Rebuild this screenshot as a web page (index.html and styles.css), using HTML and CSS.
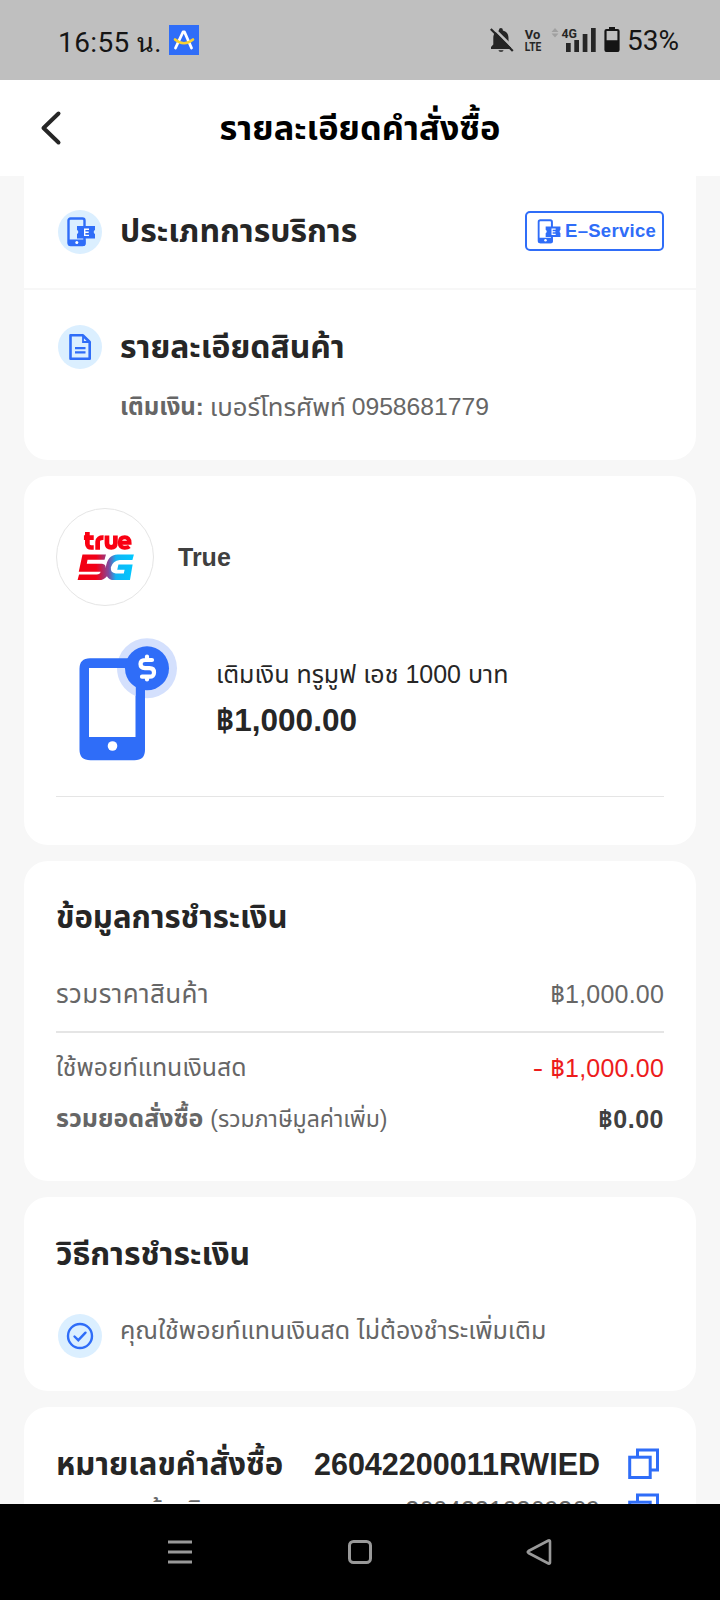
FILE: index.html
```html
<!DOCTYPE html>
<html lang="th">
<head>
<meta charset="utf-8">
<title>รายละเอียดคำสั่งซื้อ</title>
<link rel="stylesheet" href="styles.css">
</head>
<body>
<svg class="defs" width="0" height="0">
  <defs>
    <symbol id="eservice" viewBox="0 0 28 30">
      <rect x="1.5" y="1.5" width="16" height="26.5" rx="2" fill="none" stroke="#2f6df8" stroke-width="2.400"/>
      <path d="M1 22.500h17.500v4.500a2 2 0 0 1-2 2h-13.500a2 2 0 0 1-2-2z" fill="#2f6df8"/>
      <circle cx="9.800" cy="25.600" r="1.500" fill="#fff"/>
      <path d="M10 9h18v4a2.200 2.200 0 0 0 0 4v4.500h-18v-4.500a2.200 2.200 0 0 0 0-4z" fill="#2f6df8"/>
      <path d="M22 12.200h-4.300v6.200h4.300M17.700 15.300h4" fill="none" stroke="#fff" stroke-width="1.400"/>
    </symbol>
    <symbol id="copy" viewBox="0 0 32 32">
      <path d="M9.500 8.500v-6.500h20v20h-6.500" fill="none" stroke="#2f6df8" stroke-width="3"/>
      <rect x="1.700" y="9.200" width="20.500" height="20.300" fill="none" stroke="#2f6df8" stroke-width="3"/>
    </symbol>
  </defs>
</svg>
<div class="screen">
  <div class="status">
    <span class="clock">16:55 <span class="clock-th">น.</span></span>
    <svg class="app" viewBox="0 0 30 30">
      <rect width="30" height="30" fill="#2f6df8"/>
      <path d="M6.500 23l7.500-16h1.500l7 16" fill="none" stroke="#fff" stroke-width="2.800" stroke-linecap="round" stroke-linejoin="round"/>
      <path d="M6 14.500q9 7.500 18 0" fill="none" stroke="#f8d030" stroke-width="2.600" stroke-linecap="round"/>
    </svg>
    <svg class="indicators" viewBox="0 0 132 30">
      <path d="M1 23v-2l2.300-2.500v-6.500c0-4 2-6.700 5.700-7.500v-.7a1.900 1.900 0 0 1 3.800 0v.7c3.700.8 5.700 3.500 5.700 7.500v6.500l2.500 2.500v2z" fill="#262626"/>
      <path d="M8.500 24.200h5c-.3 2-4.700 2-5 0z" fill="#262626"/>
      <path d="M2.500 1.200l23 23" stroke="#bfbfbf" stroke-width="2.600"/>
      <path d="M.800 3l22 22" stroke="#262626" stroke-width="2.200"/>
      <text class="net" x="34.800" y="13" textLength="15.500" lengthAdjust="spacingAndGlyphs">Vo</text>
      <text class="net" x="34.800" y="24.800" textLength="16.500" lengthAdjust="spacingAndGlyphs">LTE</text>
      <path d="M61.500 6l3.500-4 3.500 4zM61.500 7.500l3.500 4 3.500-4z" fill="#a0a0a0"/>
      <text class="net" x="71.500" y="12" textLength="15.500" lengthAdjust="spacingAndGlyphs">4G</text>
      <path d="M76 17h4.700v9h-4.700zM84.300 14h4.700v12h-4.700zM92.700 8h4.700v18h-4.700zM101 2h4.700v24h-4.700z" fill="#262626"/>
      <rect x="115.500" y="4" width="13" height="21" rx="1" fill="none" stroke="#151515" stroke-width="2.200"/>
      <path d="M119 1h6v3h-6zM115 14.200h14v11h-14z" fill="#151515"/>
    </svg>
    <span class="percent">53%</span>
  </div>
  <header class="header">
    <svg class="back" viewBox="0 0 20 34"><path d="M17.500 2.500l-15 14.500 15 14.500" fill="none" stroke="#262626" stroke-width="4" stroke-linecap="round" stroke-linejoin="round"/></svg>
    <h1 class="title">รายละเอียดคำสั่งซื้อ</h1>
  </header>
  <main class="content">
    <section class="card top-card">
      <div class="service">
        <span class="bubble"><svg class="es-icon" viewBox="0 0 28 30"><use href="#eservice"/></svg></span>
        <h2 class="h h-wide">ประเภทการบริการ</h2>
        <span class="badge"><svg class="badge-icon" viewBox="0 0 28 30"><use href="#eservice"/></svg>E–Service</span>
      </div>
      <div class="product">
        <span class="bubble"><svg class="doc-icon" viewBox="0 0 22 26"><path d="M1.500 1.300h12.500l6.700 6.700v16.700h-19.200z" fill="none" stroke="#2f6df8" stroke-width="2.600" stroke-linejoin="round"/><path d="M14 2v6h6z" fill="#dbefff" stroke="#2f6df8" stroke-width="1.800"/><path d="M6 14.200h10.500M6 18.400h10.500" stroke="#2f6df8" stroke-width="2.200"/></svg></span>
        <div class="product-text">
          <h2 class="h h-wide">รายละเอียดสินค้า</h2>
          <p class="t phone"><b>เติมเงิน:</b><span class="phone-label">เบอร์โทรศัพท์</span><span class="phone-no">0958681779</span></p>
        </div>
      </div>
    </section>

    <section class="card item-card">
      <div class="brand">
        <span class="logo"><svg viewBox="0 0 98 98">
          <defs><linearGradient id="g5" x1="0" x2="1"><stop offset="0" stop-color="#f20010"/><stop offset=".33" stop-color="#f20018"/><stop offset=".55" stop-color="#82489c"/><stop offset=".68" stop-color="#12b4f4"/><stop offset="1" stop-color="#00c8ff"/></linearGradient></defs>
          <g fill="none" stroke="#f90012" stroke-width="4.800">
            <path d="M31 23.500v12q0 4 4.500 3.800h2M27.500 29.300h10"/>
            <path d="M41.500 41.500v-8q0-4.500 6-4.200"/>
            <path d="M51 27v8q0 4.200 4.300 4.200t4.300-4.200v-8"/>
            <path d="M65 34.500h9q-.2-5.700-4.800-5.700-5.100 0-5.100 5.500t5.300 5.200q3 0 4.500-1.200" stroke-width="4.200"/>
          </g>
          <path d="M26 46.500h24l-1.500 5.300h-17.300l-.8 4.200h15.600q4 .4 3.700 4.500 1.500-13.700 12.300-14h16.500l-1.500 5.500h-13q-7 .6-9 7.500-.6 5.800 5 6.300h8.200l.8-3.800h-7.500l1.200-5.400h14.500l-2.700 16h-16q-5.300 0-7.500-4-3.500 4-8 4h-22l1.500-5.800h18q3.500 0 4-2.700h-22.300z" fill="url(#g5)"/>
        </svg></span>
        <span class="brand-name">True</span>
      </div>
      <div class="item">
        <svg class="phone-pic" viewBox="0 0 100 124">
          <circle cx="69" cy="30.300" r="30" fill="#d4e0fd"/>
          <path d="M12 20.200h44.500q10.500 0 10.500 10.500v81q0 10.500-10.500 10.500h-44q-11 0-11-10.500v-81q0-10.500 10.500-10.500z" fill="#2f6df8"/>
          <path d="M11 30h46.500v69H11z" fill="#fff"/>
          <path d="M39 30a30 30 0 0 0 18.500 28v-28z" fill="#d4e0fd"/>
          <circle cx="69" cy="30.300" r="22" fill="#2f6df8"/>
          <circle cx="34.500" cy="108" r="4.800" fill="#fff"/>
          <path d="M74 22H67q-4.500 0-4.500 4t4.500 4.200h4.500q4.500 0 4.500 4.300t-4.500 4.200H64M69 18.500v3M69 39v2.500" fill="none" stroke="#fff" stroke-width="4.200" stroke-linecap="round"/>
        </svg>
        <div class="item-text">
          <p class="item-name">เติมเงิน ทรูมูฟ เอช 1000 บาท</p>
          <p class="item-price">฿1,000.00</p>
        </div>
      </div>
    </section>

    <section class="card pay-card">
      <h2 class="h">ข้อมูลการชำระเงิน</h2>
      <div class="row subtotal"><span class="t sub-label">รวมราคาสินค้า</span><span class="num">฿1,000.00</span></div>
      <div class="row points"><span class="t points-label">ใช้พอยท์แทนเงินสด</span><span class="num red"><span class="minus">-</span> ฿1,000.00</span></div>
      <div class="row total"><span class="t"><b>รวมยอดสั่งซื้อ</b> <span class="vat">(รวมภาษีมูลค่าเพิ่ม)</span></span><b class="num dark">฿0.00</b></div>
    </section>

    <section class="card method-card">
      <h2 class="h h-wide">วิธีการชำระเงิน</h2>
      <div class="method">
        <span class="bubble"><svg class="check" viewBox="0 0 28 28"><circle cx="14" cy="14" r="12" fill="none" stroke="#2f6df8" stroke-width="2.400"/><path d="M8.500 14.500l3.800 3.700 7.200-7.500" fill="none" stroke="#2f6df8" stroke-width="2.400" stroke-linecap="round"/></svg></span>
        <p class="t">คุณใช้พอยท์แทนเงินสด ไม่ต้องชำระเพิ่มเติม</p>
      </div>
    </section>

    <section class="card order-card">
      <div class="order-row"><h2 class="h">หมายเลขคำสั่งซื้อ</h2><b class="order-no">26042200011RWIED</b><svg class="copy" viewBox="0 0 32 32"><use href="#copy"/></svg></div>
      <div class="order-row ref"><span class="t ref-label">หมายเลขอ้างอิง</span><span class="ref-no">26042210369369</span><svg class="copy" viewBox="0 0 32 32"><use href="#copy"/></svg></div>
    </section>
  </main>
  <nav class="nav">
    <svg viewBox="0 0 26 28"><path d="M1 4h24M1 14h24M1 24h24" stroke="#999" stroke-width="3"/></svg>
    <svg viewBox="0 0 26 28"><rect x="2.500" y="3.500" width="21" height="21" rx="4" fill="none" stroke="#999" stroke-width="3"/></svg>
    <svg viewBox="0 0 26 28"><path d="M21.500 2.500q1.500-.5 1.500 1v21q0 1.500-1.500 1L1.500 15q-1.500-1 0-2z" fill="none" stroke="#999" stroke-width="2.600" stroke-linejoin="round"/></svg>
  </nav>
</div>
</body>
</html>
```
FILE: styles.css
```css
* { box-sizing: border-box; }
body, h1, h2, p { margin: 0; }
body { background: #f7f7f7; font-family: "Liberation Sans", "Noto Sans Thai", sans-serif; color: #262626; }
.defs { position: absolute; }
svg { display: block; flex: none; overflow: visible; }
.screen { width: 720px; height: 1600px; display: flex; flex-direction: column; overflow: hidden; white-space: nowrap; }

.status { height: 80px; flex: none; background: #bfbfbf; display: flex; align-items: center; padding: 0 40px 0 58px; color: #151515; font-family: Roboto, "Noto Sans Thai", sans-serif; font-size: 28px; }
.clock { width: 104px; line-height: 34px; padding-top: 5px; letter-spacing: .4px; }
.clock-th { font-family: Roboto, "Noto Sans Thai Looped", Loma, Garuda, Waree, "Noto Sans Thai", sans-serif; font-size: 27px; }
.app { width: 30px; height: 30px; margin-left: 7px; }
.indicators { width: 132px; height: 30px; margin: 2px 5px 0 auto; }
.net { font: bold 13.500px Roboto, sans-serif; fill: #262626; }
.percent { width: 53px; }

.header { height: 96px; flex: none; background: #fff; display: flex; align-items: center; justify-content: center; padding: 0 41px; }
.back { width: 20px; height: 34px; }
.title { flex: 1; text-align: center; padding-right: 20px; font-size: 34.400px; line-height: 48px; color: #000; }

.content { flex: 1; min-height: 0; overflow: hidden; padding: 0 24px; display: flex; flex-direction: column; gap: 16px; }
.card { flex: none; background: #fff; border-radius: 24px; padding: 0 32px; }
.h { font-size: 31.100px; line-height: 44px; color: #262626; }
.h-wide { font-size: 31.900px; }
.t { font-size: 25px; line-height: 36px; color: #666; }
.num { font-size: 25px; line-height: 36px; color: #666; letter-spacing: .2px; }
.red { color: #ed1c1c; }
.minus { display: inline-block; transform: scaleX(1.250); transform-origin: right; }
.dark { color: #404040; letter-spacing: .5px; }
.bubble { width: 44px; height: 44px; border-radius: 50%; background: #dbefff; display: grid; place-items: center; flex: none; margin: 0 18px 0 2px; }

.top-card { height: 284px; border-radius: 0 0 24px 24px; padding: 0; }
.service { height: 114px; padding: 0 32px 2px; display: flex; align-items: center; border-bottom: 2px solid #f7f7f7; }
.service .bubble { margin-top: 2px; }
.es-icon { width: 28px; height: 30px; margin-left: 2px; }
.badge { margin-left: auto; width: 139px; height: 40px; border: 2px solid #2f6df8; border-radius: 5px; display: flex; align-items: center; gap: 4px; padding-left: 10px; color: #2f6df8; font-size: 18.500px; font-weight: bold; letter-spacing: .3px; }
.badge-icon { width: 24px; height: 25px; }
.product { display: flex; padding: 35px 32px 0; }
.doc-icon { width: 22px; height: 26px; }
.phone { margin-top: 20px; display: flex; gap: 6px; }
.phone b { font-size: 24px; }
.phone-label { font-size: 25.700px; }
.phone-no { font-size: 24.700px; }

.item-card { height: 369px; padding-top: 32px; }
.brand { display: flex; align-items: center; gap: 24px; }
.logo { width: 98px; height: 98px; border: 1px solid #e5e5e5; border-radius: 50%; }
.brand-name { font-size: 25px; font-weight: bold; color: #404040; }
.item { height: 191px; border-bottom: 1px solid #e5e5e5; display: flex; padding: 32px 0 0 22px; gap: 38px; }
.phone-pic { width: 100px; height: 124px; }
.item-name { font-size: 25px; line-height: 36px; margin-top: 18px; }
.item-price { font-size: 31.500px; line-height: 44px; margin-top: 6px; font-weight: bold; }

.pay-card { height: 320px; padding-top: 35px; }
.row { display: flex; justify-content: space-between; align-items: center; }
.subtotal { height: 93px; padding-top: 17px; border-bottom: 2px solid #e5e5e5; }
.sub-label { font-size: 26px; letter-spacing: .4px; }
.points { padding-top: 17px; }
.points-label { font-size: 24.800px; }
.total { padding-top: 14px; }
.vat { font-size: 23px; }

.method-card { height: 194px; padding-top: 35px; }
.method { display: flex; padding-top: 38px; }
.method .t { margin-top: -2px; }
.check { width: 28px; height: 28px; }

.order-card { height: 240px; padding-top: 34px; }
.order-row { display: flex; align-items: center; height: 45px; }
.order-row .h { padding-top: 2px; }
.order-no { margin-left: auto; font-size: 30.500px; line-height: 44px; padding-top: 1px; }
.ref-label { font-size: 25.700px; }
.ref-no { margin-left: auto; font-size: 25px; line-height: 36px; color: #666; padding-top: 2px; }
.copy { width: 32px; height: 32px; margin: 0 4px 0 28px; }

.nav { height: 96px; flex: none; background: #000; display: flex; align-items: center; justify-content: space-between; padding: 0 167px; }
.nav svg { width: 26px; height: 28px; }
```
